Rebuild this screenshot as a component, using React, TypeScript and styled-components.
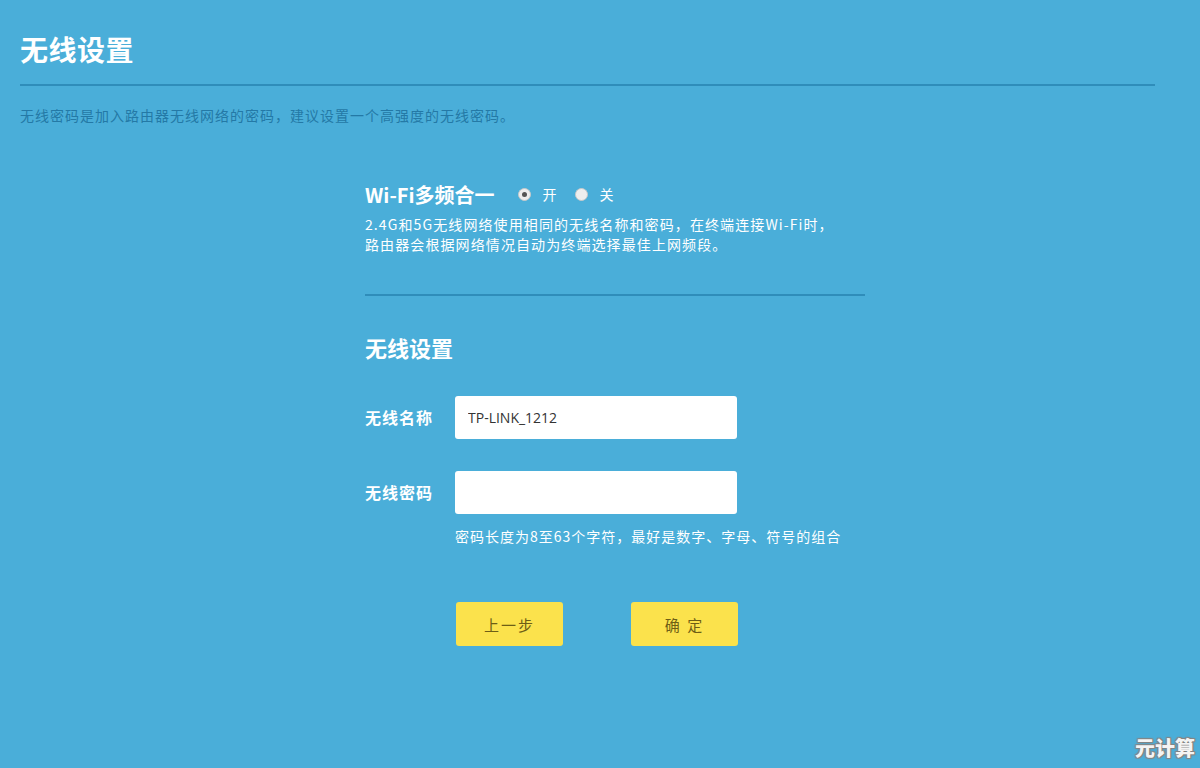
import React from "react";
import styled, { createGlobalStyle } from "styled-components";

const GlobalStyle = createGlobalStyle`
  html, body {
    margin: 0;
    padding: 0;
    background: #4aaed9;
  }
  body {
    font-family: "Microsoft YaHei", "Noto Sans CJK SC", "Noto Sans", sans-serif;
  }
`;

const Page = styled.div`
  width: 1200px;
  height: 768px;
  background: #4aaed9;
  position: relative;
  overflow: hidden;
  box-sizing: border-box;
  padding: 29px 45px 0 20px;
`;

const PageTitle = styled.h1`
  margin: 0;
  font-size: 28px;
  line-height: 40px;
  font-weight: 700;
  color: #ffffff;
  letter-spacing: 0.5px;
`;

const Divider = styled.div<{ $top?: number }>`
  height: 2px;
  background: #2f8dba;
  width: 100%;
  margin-top: ${(p) => p.$top ?? 0}px;
`;

const PageDesc = styled.p`
  margin: 19px 0 0;
  font-size: 14px;
  line-height: 20px;
  letter-spacing: 1px;
  color: #2479a6;
`;

const Panel = styled.section`
  width: 500px;
  margin: 54px 0 0 345px;
`;

const SwitchRow = styled.div`
  display: flex;
  align-items: center;
  height: 30px;
`;

const SwitchTitle = styled.span`
  font-size: 20px;
  font-weight: 700;
  color: #ffffff;
  margin-right: 23px;
`;

const RadioLabel = styled.label`
  display: flex;
  align-items: center;
  gap: 12px;
  font-size: 14px;
  color: #ffffff;
  margin-right: 18px;
`;

const RadioDot = styled.span<{ $checked?: boolean }>`
  width: 13px;
  height: 13px;
  border-radius: 50%;
  background: #eeeeee;
  border: 1px solid #c9c9c9;
  box-sizing: border-box;
  display: flex;
  align-items: center;
  justify-content: center;

  &::after {
    content: "";
    width: 5px;
    height: 5px;
    border-radius: 50%;
    background: ${(p) => (p.$checked ? "#555555" : "transparent")};
  }
`;

const Note = styled.p`
  margin: 5px 0 0;
  font-size: 14px;
  line-height: 20px;
  letter-spacing: 1.1px;
  color: #ffffff;
`;

const SectionTitle = styled.h2`
  margin: 36px 0 0;
  font-size: 22px;
  line-height: 30px;
  font-weight: 700;
  color: #ffffff;
`;

const Form = styled.div`
  display: grid;
  grid-template-columns: 90px 282px;
  row-gap: 32px;
  margin-top: 34px;
  align-items: start;
`;

const FieldLabel = styled.span`
  font-size: 16px;
  line-height: 43px;
  font-weight: 700;
  letter-spacing: 1px;
  color: #ffffff;
`;

const Field = styled.div`
  display: flex;
  flex-direction: column;
`;

const TextInput = styled.input`
  width: 282px;
  height: 43px;
  box-sizing: border-box;
  border: none;
  border-radius: 3px;
  background: #ffffff;
  padding: 0 13px;
  font-family: "Open Sans", "Noto Sans", sans-serif;
  font-size: 14px;
  color: #333333;
  outline: none;
`;

const Hint = styled.div`
  margin-top: 12px;
  font-size: 14px;
  line-height: 20px;
  letter-spacing: 1px;
  color: #ffffff;
  white-space: nowrap;
`;

const Buttons = styled.div`
  display: flex;
  gap: 68px;
  margin: 56px 0 0 91px;
`;

const YellowButton = styled.button`
  width: 107px;
  height: 44px;
  border: none;
  border-radius: 3px;
  background: #fbe24c;
  color: #6e5e16;
  font-family: "Noto Sans CJK SC", sans-serif;
  font-size: 15px;
  letter-spacing: 2px;
  cursor: pointer;
`;

const Watermark = styled.div`
  position: absolute;
  right: 5px;
  bottom: 6px;
  font-size: 20px;
  font-weight: 900;
  color: #f4f4f4;
  text-shadow: 0 0 1px #666, 1px 1px 1px #888, -1px -1px 1px #888, 1px -1px 1px #888, -1px 1px 1px #888;
`;

const App: React.FC = () => {
  return (
    <>
      <GlobalStyle />
      <Page>
        <PageTitle>无线设置</PageTitle>
        <Divider $top={15} />
        <PageDesc>无线密码是加入路由器无线网络的密码，建议设置一个高强度的无线密码。</PageDesc>

        <Panel>
          <SwitchRow>
            <SwitchTitle>Wi-Fi多频合一</SwitchTitle>
            <RadioLabel>
              <RadioDot $checked />开
            </RadioLabel>
            <RadioLabel>
              <RadioDot />关
            </RadioLabel>
          </SwitchRow>
          <Note>
            2.4G和5G无线网络使用相同的无线名称和密码，在终端连接Wi-Fi时，
            <br />
            路由器会根据网络情况自动为终端选择最佳上网频段。
          </Note>

          <Divider $top={40} />

          <SectionTitle>无线设置</SectionTitle>

          <Form>
            <FieldLabel>无线名称</FieldLabel>
            <Field>
              <TextInput defaultValue="TP-LINK_1212" />
            </Field>
            <FieldLabel>无线密码</FieldLabel>
            <Field>
              <TextInput type="text" />
              <Hint>密码长度为8至63个字符，最好是数字、字母、符号的组合</Hint>
            </Field>
          </Form>

          <Buttons>
            <YellowButton>上一步</YellowButton>
            <YellowButton>确 定</YellowButton>
          </Buttons>
        </Panel>

        <Watermark>元计算</Watermark>
      </Page>
    </>
  );
};

export default App;
